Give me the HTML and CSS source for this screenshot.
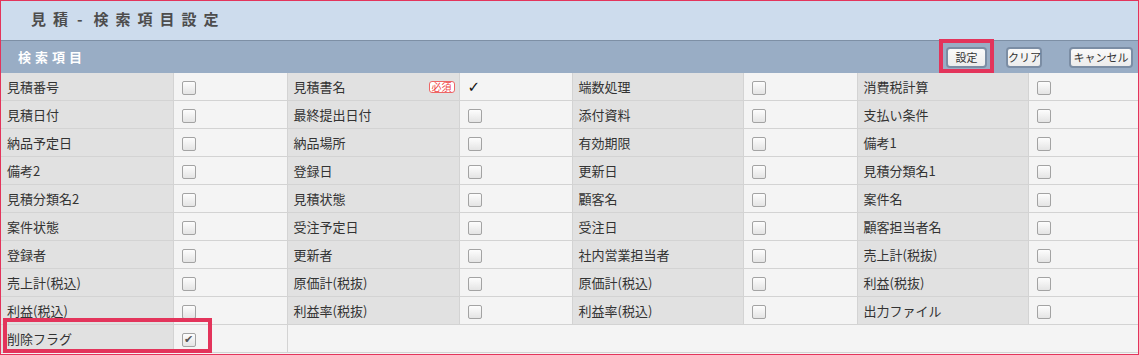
FILE: index.html
```html
<!DOCTYPE html>
<html>
<head>
    <meta charset="utf-8">
    <meta name="viewport" content="width=device-width, initial-scale=1.0">
    <title>見積 - 検索項目設定</title>
    <link rel="stylesheet" href="styles.css">
</head>
<body>
    <div class="frame">
        <div class="page-head">
            <h1>見積<span class="dash">-</span>検索項目設定</h1>
        </div>

        <div class="section-bar">
            <h2 class="section-title">検索項目</h2>
            <div class="bar-buttons">
                <span class="hl-wrap">
                    <button class="bar-btn">設定</button>
                    <span class="hl hl-btn"></span>
                </span>
                <button class="bar-btn btn-clear">クリア</button>
                <button class="bar-btn btn-cancel">キャンセル</button>
            </div>
        </div>

        <table class="items">
            <colgroup>
                <col style="width:172px"><col style="width:114px">
                <col style="width:172px"><col style="width:113px">
                <col style="width:171px"><col style="width:114px">
                <col style="width:171px"><col style="width:110px">
            </colgroup>
            <tr>
                <td class="lbl">見積番号</td><td class="chk"><span class="cb"></span></td>
                <td class="lbl"><div class="lbl-req">見積書名<span class="req">必須</span></div></td><td class="chk"><span class="fixed">✓</span></td>
                <td class="lbl">端数処理</td><td class="chk"><span class="cb"></span></td>
                <td class="lbl">消費税計算</td><td class="chk"><span class="cb"></span></td>
            </tr>
            <tr>
                <td class="lbl">見積日付</td><td class="chk"><span class="cb"></span></td>
                <td class="lbl">最終提出日付</td><td class="chk"><span class="cb"></span></td>
                <td class="lbl">添付資料</td><td class="chk"><span class="cb"></span></td>
                <td class="lbl">支払い条件</td><td class="chk"><span class="cb"></span></td>
            </tr>
            <tr>
                <td class="lbl">納品予定日</td><td class="chk"><span class="cb"></span></td>
                <td class="lbl">納品場所</td><td class="chk"><span class="cb"></span></td>
                <td class="lbl">有効期限</td><td class="chk"><span class="cb"></span></td>
                <td class="lbl">備考1</td><td class="chk"><span class="cb"></span></td>
            </tr>
            <tr>
                <td class="lbl">備考2</td><td class="chk"><span class="cb"></span></td>
                <td class="lbl">登録日</td><td class="chk"><span class="cb"></span></td>
                <td class="lbl">更新日</td><td class="chk"><span class="cb"></span></td>
                <td class="lbl">見積分類名1</td><td class="chk"><span class="cb"></span></td>
            </tr>
            <tr>
                <td class="lbl">見積分類名2</td><td class="chk"><span class="cb"></span></td>
                <td class="lbl">見積状態</td><td class="chk"><span class="cb"></span></td>
                <td class="lbl">顧客名</td><td class="chk"><span class="cb"></span></td>
                <td class="lbl">案件名</td><td class="chk"><span class="cb"></span></td>
            </tr>
            <tr>
                <td class="lbl">案件状態</td><td class="chk"><span class="cb"></span></td>
                <td class="lbl">受注予定日</td><td class="chk"><span class="cb"></span></td>
                <td class="lbl">受注日</td><td class="chk"><span class="cb"></span></td>
                <td class="lbl">顧客担当者名</td><td class="chk"><span class="cb"></span></td>
            </tr>
            <tr>
                <td class="lbl">登録者</td><td class="chk"><span class="cb"></span></td>
                <td class="lbl">更新者</td><td class="chk"><span class="cb"></span></td>
                <td class="lbl">社内営業担当者</td><td class="chk"><span class="cb"></span></td>
                <td class="lbl">売上計(税抜)</td><td class="chk"><span class="cb"></span></td>
            </tr>
            <tr>
                <td class="lbl">売上計(税込)</td><td class="chk"><span class="cb"></span></td>
                <td class="lbl">原価計(税抜)</td><td class="chk"><span class="cb"></span></td>
                <td class="lbl">原価計(税込)</td><td class="chk"><span class="cb"></span></td>
                <td class="lbl">利益(税抜)</td><td class="chk"><span class="cb"></span></td>
            </tr>
            <tr>
                <td class="lbl">利益(税込)</td><td class="chk"><span class="cb"></span></td>
                <td class="lbl">利益率(税抜)</td><td class="chk"><span class="cb"></span></td>
                <td class="lbl">利益率(税込)</td><td class="chk"><span class="cb"></span></td>
                <td class="lbl">出力ファイル</td><td class="chk"><span class="cb"></span></td>
            </tr>
            <tr>
                <td class="lbl lbl-mark">削除フラグ<span class="hl hl-row"></span></td><td class="chk"><span class="cb cb-on">✔</span></td>
                <td class="blank" colspan="6"></td>
            </tr>
        </table>
    </div>
</body>
</html>
```

FILE: styles.css
```css
body {
    margin: 0;
    padding: 0;
    font-family: "Noto Sans CJK JP", "Liberation Sans", sans-serif;
    background: #f4f4f4;
}

.frame {
    width: 1137px;
    height: 353px;
    border: 1px solid #e3345b;
    overflow: hidden;
    background: #f4f4f4;
}

.page-head {
    height: 39px;
    background: #cddced;
    border-bottom: 1px solid #7d8fa5;
}

.page-head h1 {
    margin: 0;
    padding: 7px 0 0 30px;
    font-size: 15px;
    line-height: 22px;
    font-weight: bold;
    color: #4d4d4d;
    letter-spacing: 7px;
}

.dash {
    margin-left: 2px;
    margin-right: 4px;
}

.section-bar {
    height: 32px;
    background: #99adc5;
    display: flex;
    align-items: center;
    justify-content: space-between;
}

.section-title {
    margin: 0 0 0 17px;
    font-size: 13px;
    line-height: 18px;
    color: #fff;
    letter-spacing: 4px;
}

.bar-buttons {
    display: flex;
    align-items: center;
    padding-right: 5px;
}

.hl-wrap {
    position: relative;
    display: inline-flex;
}

.bar-btn {
    font-family: "Noto Sans CJK JP", "Liberation Sans", sans-serif;
    font-size: 11px;
    line-height: 15px;
    height: 21px;
    padding: 0;
    white-space: nowrap;
    background: linear-gradient(#fafafa, #ececec);
    color: #333;
    border: 2px solid #7b8da4;
    border-radius: 4px;
    cursor: pointer;
}

.hl-wrap .bar-btn {
    width: 41px;
}

.btn-clear {
    margin-left: 19px;
    width: 36px;
}

.btn-cancel {
    margin-left: 27px;
    width: 64px;
}

.hl {
    position: absolute;
    border: 4px solid #e3345b;
    pointer-events: none;
}

.hl-btn {
    left: -7px;
    top: -8px;
    width: 47px;
    height: 26px;
}

.items {
    border-collapse: collapse;
    table-layout: fixed;
    width: 1137px;
}

.items td {
    height: 27px;
    padding: 0;
    border-right: 1px solid #d3d3d3;
    border-bottom: 1px solid #d3d3d3;
    font-size: 13px;
    color: #333;
    vertical-align: middle;
    white-space: nowrap;
}

.items td:last-child {
    border-right: none;
}

.lbl {
    background: #e1e1e1;
    padding-left: 6px !important;
}

.lbl-req {
    display: flex;
    align-items: center;
    justify-content: space-between;
    padding-right: 4px;
}

.req {
    font-size: 10px;
    line-height: 10px;
    color: #ee4444;
    border: 1px solid #ee6666;
    border-radius: 3px;
    padding: 0 2px;
    background: #fff;
}

.chk {
    background: #f4f4f4;
    padding-left: 8px !important;
}

.cb {
    display: inline-block;
    width: 12px;
    height: 12px;
    border: 1px solid #a3a3a3;
    border-radius: 2px;
    background: linear-gradient(#fdfdfd, #e4e4e4);
    vertical-align: middle;
    font-size: 10px;
    line-height: 12px;
    text-align: center;
    color: #444;
    font-family: "DejaVu Sans", sans-serif;
}

.cb-on {
    font-size: 11px;
    color: #555;
}

.fixed {
    font-family: "DejaVu Sans", sans-serif;
    font-size: 15px;
    color: #111;
}

.lbl-mark {
    position: relative;
}

.hl-row {
    left: 2px;
    top: -7px;
    width: 201px;
    height: 27px;
}

.blank {
    background: #f4f4f4;
}
```
